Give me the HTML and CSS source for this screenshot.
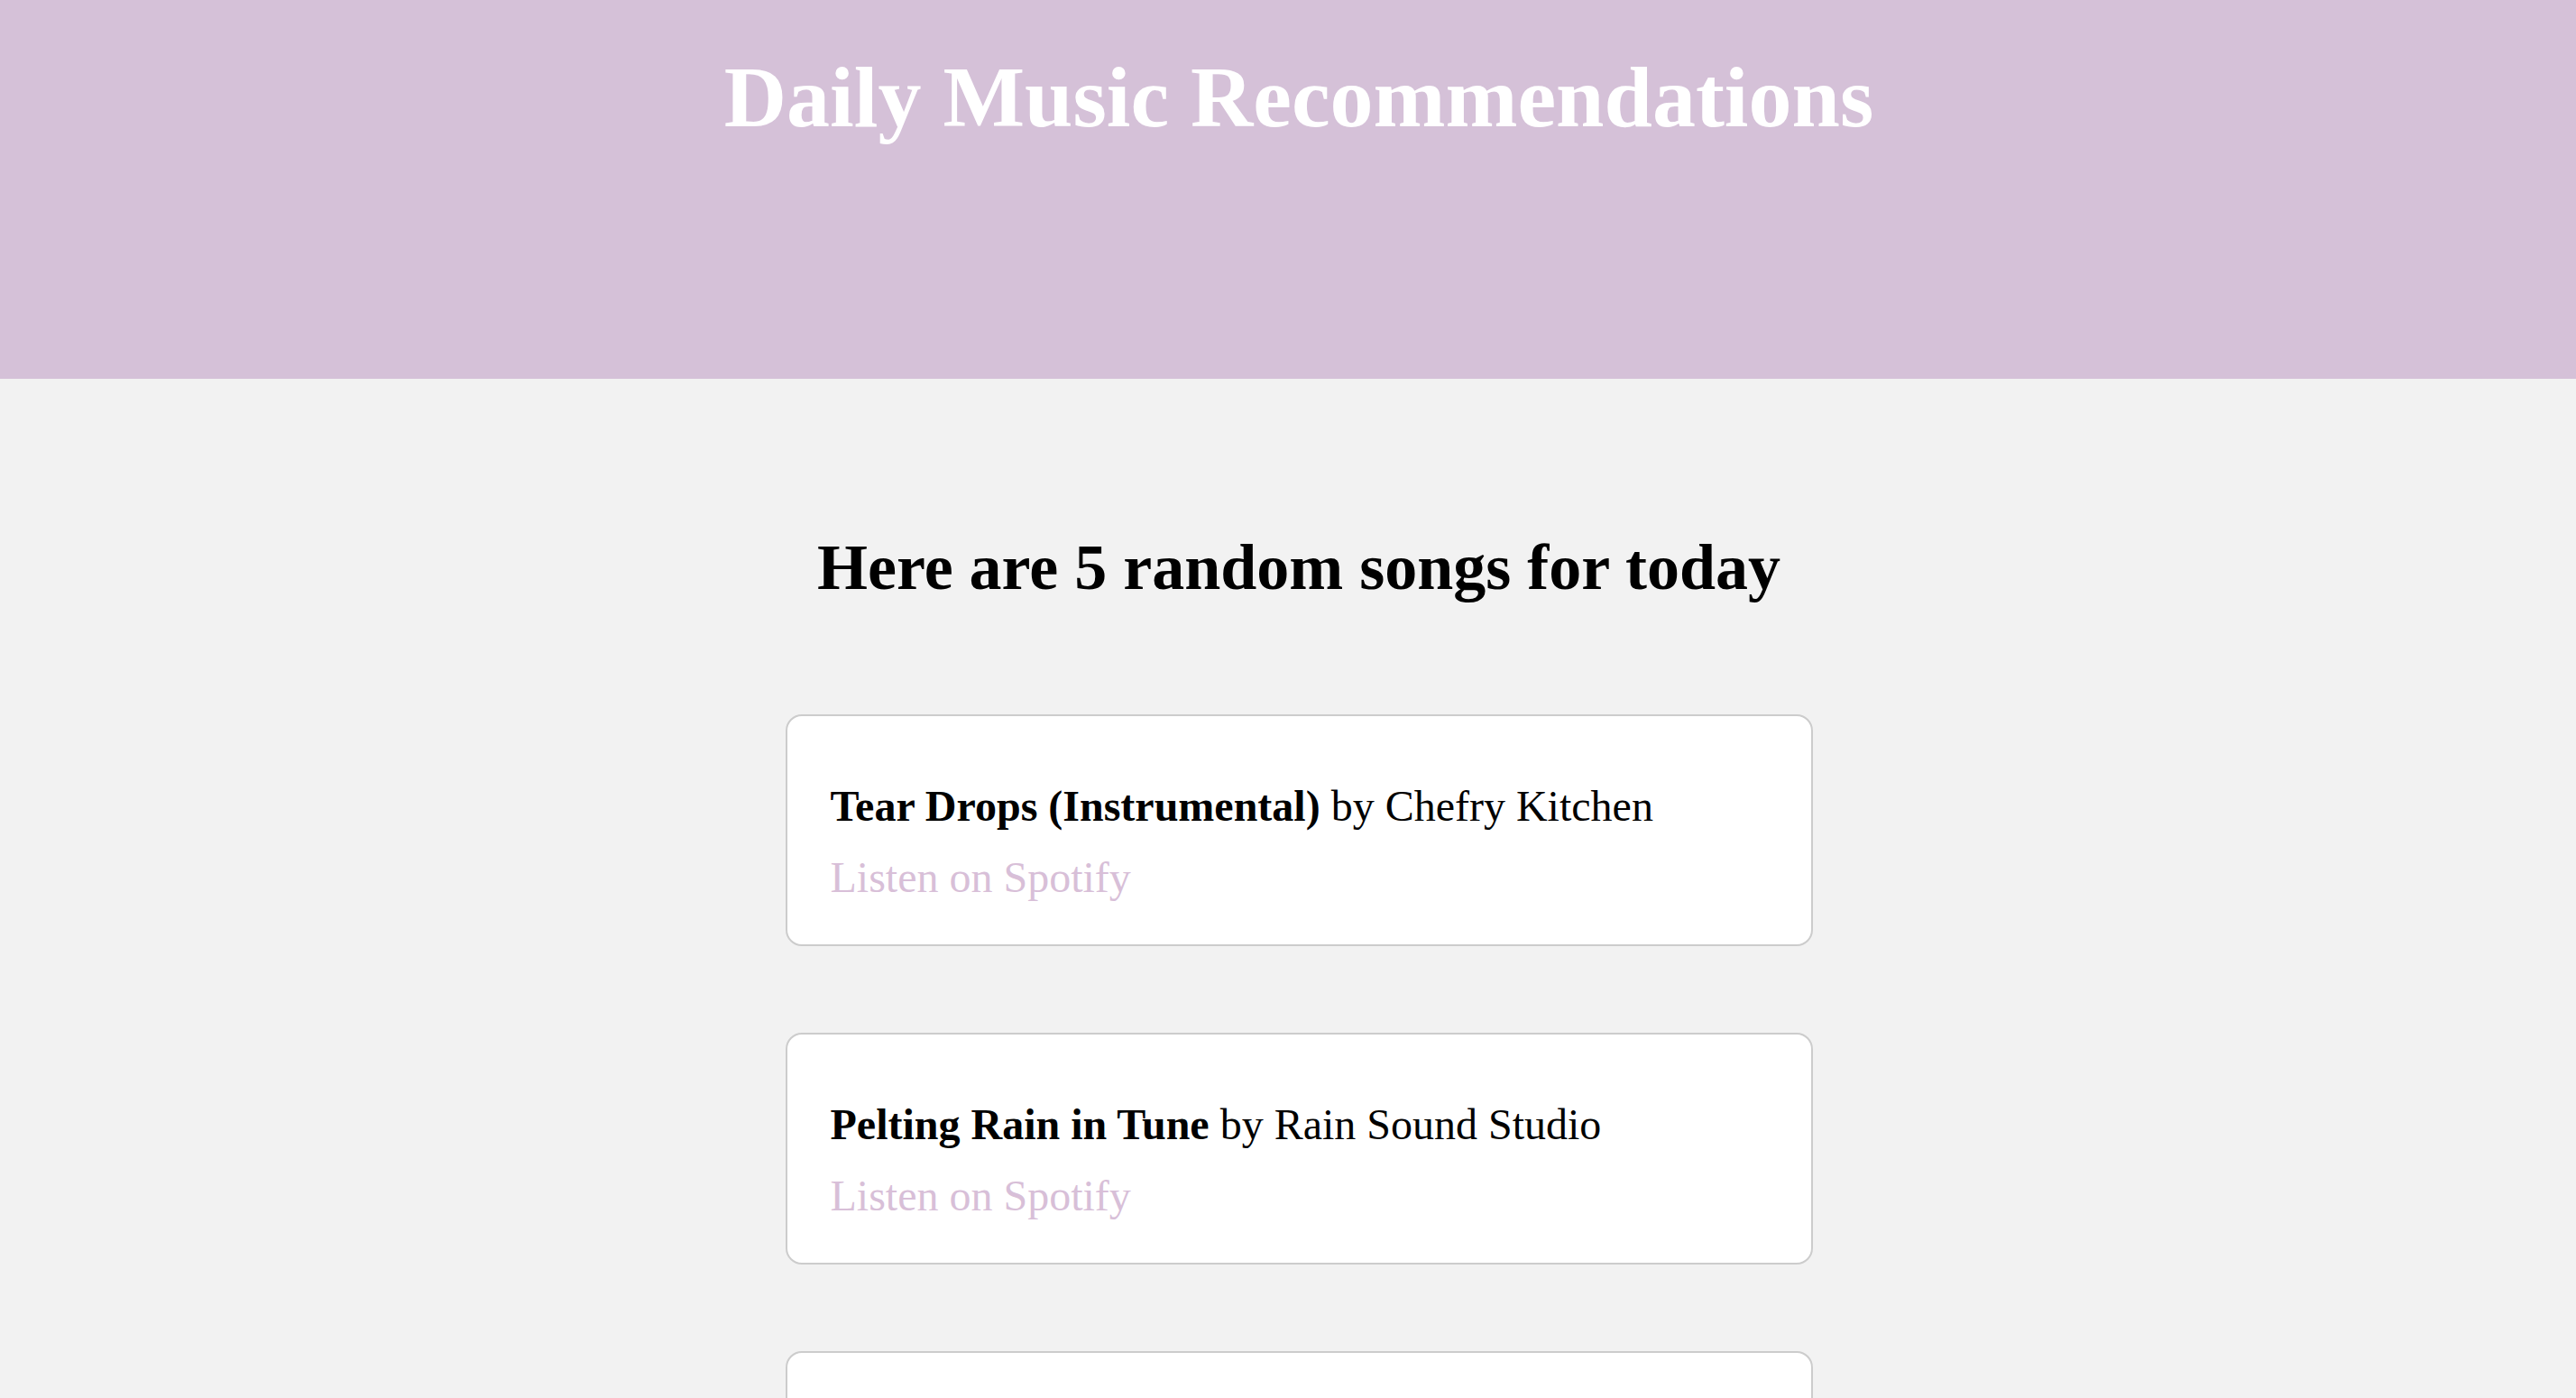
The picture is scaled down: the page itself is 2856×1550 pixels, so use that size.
FILE: index.html
```html
<!DOCTYPE html>
<html lang="en">
<head>
<meta charset="utf-8">
<title>Daily Music Recommendations</title>
<link rel="stylesheet" href="styles.css">
</head>
<body>
<header class="site-header">
  <h1 class="site-title">Daily Music Recommendations</h1>
</header>
<main class="content">
  <h2 class="intro">Here are 5 random songs for today</h2>
  <ul class="songs">
    <li class="song-card">
      <p class="song-line"><strong>Tear Drops (Instrumental)</strong> by Chefry Kitchen</p>
      <a class="song-link" href="#">Listen on Spotify</a>
    </li>
    <li class="song-card">
      <p class="song-line"><strong>Pelting Rain in Tune</strong> by Rain Sound Studio</p>
      <a class="song-link" href="#">Listen on Spotify</a>
    </li>
    <li class="song-card">
      <p class="song-line"><strong>Morning Light</strong> by Quiet Piano</p>
      <a class="song-link" href="#">Listen on Spotify</a>
    </li>
    <li class="song-card">
      <p class="song-line"><strong>Slow Waves</strong> by Ocean Sounds</p>
      <a class="song-link" href="#">Listen on Spotify</a>
    </li>
    <li class="song-card">
      <p class="song-line"><strong>Evening Breeze</strong> by Lofi Garden</p>
      <a class="song-link" href="#">Listen on Spotify</a>
    </li>
  </ul>
</main>
</body>
</html>
```
FILE: styles.css
```css
body {
  margin: 0;
  background: #f2f2f2;
  font-family: "Liberation Serif", "Times New Roman", serif;
  font-size: 48px;
  color: #000;
}

.site-header {
  background: #d5c1d8;
  height: 420px;
  box-sizing: border-box;
  padding: 52px 0 0 24px;
  text-align: center;
}

.site-title {
  margin: 0;
  font-size: 96px;
  font-weight: bold;
  color: #fff;
}

.content {
  padding: 168px 0 80px 24px;
  display: flex;
  flex-direction: column;
  align-items: center;
}

.intro {
  margin: 0;
  font-size: 72px;
  font-weight: bold;
}

.songs {
  list-style: none;
  margin: 121px 0 0;
  padding: 0;
  width: 1139px;
  display: flex;
  flex-direction: column;
  gap: 96px;
}

.song-card {
  background: #fff;
  border: 2px solid #cccccc;
  border-radius: 18px;
  padding: 48px 48px 47px;
}

.song-line {
  margin: 24px 0;
}

.song-link {
  display: block;
  color: #d8bfd8;
  text-decoration: none;
}
```
